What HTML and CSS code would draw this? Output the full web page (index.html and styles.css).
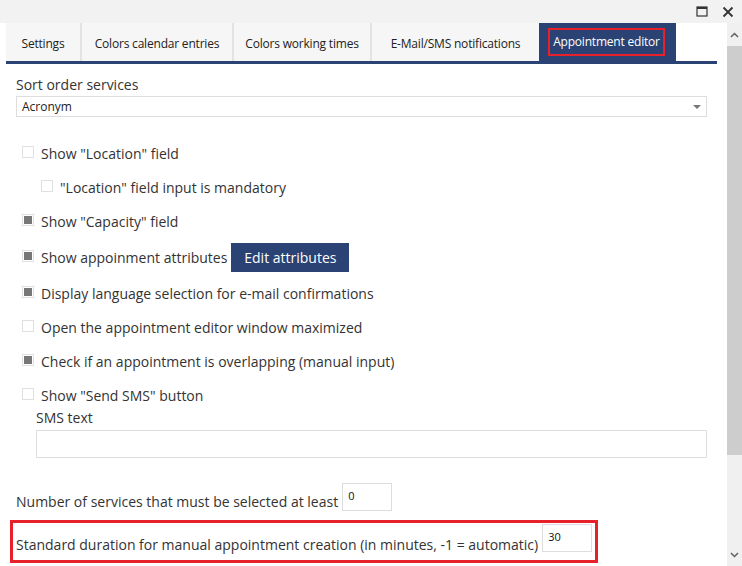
FILE: index.html
```html
<!DOCTYPE html>
<html lang="en">
<head>
    <meta charset="UTF-8">
    <title>Appointment editor</title>
    <link rel="stylesheet" href="styles.css">
</head>
<body>

    <div class="titlebar">
        <svg class="tb-icon" width="12" height="11" viewBox="0 0 12 11">
            <rect x="1" y="1" width="10" height="9" fill="none" stroke="#333" stroke-width="1.2"/>
            <rect x="1" y="1" width="10" height="2" fill="#333"/>
        </svg>
        <svg class="tb-icon" width="12" height="12" viewBox="0 0 12 12">
            <path d="M1.5 1.5 L10.5 10.5 M10.5 1.5 L1.5 10.5" stroke="#333" stroke-width="1.8"/>
        </svg>
    </div>

    <div class="window">

        <div class="content">

            <div class="tabs">
                <div class="tab t-settings">Settings</div>
                <div class="tab t-calendar">Colors calendar entries</div>
                <div class="tab t-working">Colors working times</div>
                <div class="tab t-notify">E-Mail/SMS notifications</div>
                <div class="tab t-editor active"><span class="mark">Appointment editor</span></div>
            </div>

            <div class="form">

                <div class="label">Sort order services</div>
                <div class="select">
                    <span>Acronym</span>
                    <span class="caret"></span>
                </div>

                <div class="options">
                    <div class="check"><span class="box"></span>Show "Location" field</div>
                    <div class="check sub"><span class="box"></span>"Location" field input is mandatory</div>
                    <div class="check"><span class="box on"></span>Show "Capacity" field</div>
                    <div class="check wide"><span class="box on"></span>Show appoinment attributes<button class="btn">Edit attributes</button></div>
                    <div class="check"><span class="box on"></span>Display language selection for e-mail confirmations</div>
                    <div class="check"><span class="box"></span>Open the appointment editor window maximized</div>
                    <div class="check"><span class="box on"></span>Check if an appointment is overlapping (manual input)</div>
                    <div class="check"><span class="box"></span>Show "Send SMS" button</div>
                </div>

                <div class="sms">
                    <div class="label">SMS text</div>
                    <div class="textbox"></div>
                </div>

                <div class="row">Number of services that must be selected at least <span class="num">0</span></div>

                <div class="row marked">Standard duration for manual appointment creation (in minutes, -1 = automatic) <span class="num">30</span></div>

            </div>
        </div>

        <div class="scrollbar">
            <div class="sb-btn">
                <svg width="9" height="6" viewBox="0 0 9 6"><path d="M1 5 L4.5 1.5 L8 5" fill="none" stroke="#606060" stroke-width="1.5"/></svg>
            </div>
            <div class="sb-thumb"></div>
            <div class="sb-track"></div>
            <div class="sb-btn">
                <svg width="9" height="6" viewBox="0 0 9 6"><path d="M1 1 L4.5 4.5 L8 1" fill="none" stroke="#606060" stroke-width="1.5"/></svg>
            </div>
        </div>

    </div>

</body>
</html>
```

FILE: styles.css
```css
html, body {
    margin: 0;
    padding: 0;
}

body {
    width: 742px;
    height: 566px;
    overflow: hidden;
    background: #ffffff;
    font-family: "Open Sans", "Noto Sans", sans-serif;
    font-size: 14px;
    color: #333333;
}

.titlebar {
    height: 23px;
    background: #f2f2f2;
    display: flex;
    justify-content: flex-end;
    align-items: center;
    gap: 14px;
    padding-right: 8px;
    box-sizing: border-box;
}

.tb-icon {
    display: block;
}

.window {
    display: flex;
    height: 543px;
}

.content {
    flex: 1;
    overflow: hidden;
}

.tabs {
    display: flex;
    margin: 0 10px 0 6px;
    height: 38px;
    border-bottom: 3px solid #2a4274;
}

.tab {
    background: #f6f6f6;
    font-size: 12px;
    letter-spacing: -0.2px;
    color: #222222;
    display: flex;
    align-items: center;
    justify-content: center;
    box-sizing: border-box;
    padding-top: 2px;
    white-space: nowrap;
}

.tab + .tab {
    border-left: 2px solid #e3e3e3;
}

.t-settings { width: 74px; }
.t-calendar { width: 152px; }
.t-working  { width: 138px; }
.t-notify   { width: 169px; }
.t-editor   { width: 137px; }

.tab.active {
    background: #2a4274;
    color: #ffffff;
    border-left: none;
    padding: 0 2px 0 0;
}

.tab .mark {
    border: 2px solid #e8202a;
    padding: 3px 3px 4px 3px;
}

.form {
    padding: 11px 20px 0 16px;
}

.label {
    line-height: 19px;
}

.select {
    margin-top: 2px;
    height: 21px;
    border: 1px solid #dddddd;
    box-sizing: border-box;
    display: flex;
    align-items: center;
    justify-content: space-between;
    padding: 0 5px;
    font-size: 12px;
    color: #222222;
}

.caret {
    width: 0;
    height: 0;
    border-left: 4px solid transparent;
    border-right: 4px solid transparent;
    border-top: 4px solid #777777;
}

.options {
    padding-top: 19px;
    padding-left: 6px;
}

.check {
    display: flex;
    align-items: center;
    height: 34px;
}

.check.sub {
    padding-left: 19px;
}

.check.wide {
    height: 37px;
    margin-top: 1px;
}

.box {
    width: 12px;
    height: 12px;
    border: 1px solid #e0e0e0;
    box-sizing: border-box;
    margin-right: 7px;
    margin-top: -3px;
    position: relative;
    flex: none;
}

.box.on::after {
    content: "";
    position: absolute;
    left: 1px;
    top: 1px;
    width: 8px;
    height: 8px;
    background: #777777;
}

.btn {
    margin-left: 4px;
    height: 29px;
    width: 118px;
    border: none;
    background: #2a4274;
    color: #ffffff;
    font-family: "Open Sans", "Noto Sans", sans-serif;
    font-size: 14px;
    padding: 0;
}

.sms {
    padding-left: 20px;
    margin-top: -4px;
}

.textbox {
    margin-top: 3px;
    height: 28px;
    border: 1px solid #dddddd;
    box-sizing: border-box;
}

.row {
    display: flex;
    align-items: flex-end;
    margin-top: 25px;
    line-height: 19px;
}

.num {
    margin-left: 4px;
    width: 50px;
    height: 28px;
    border: 1px solid #dddddd;
    box-sizing: border-box;
    font-size: 11px;
    color: #111111;
    line-height: 14px;
    padding: 5px 0 0 5px;
}

.row.marked {
    margin: 9px 0 0 -6px;
    width: 588px;
    height: 43px;
    border: 3px solid #e8202a;
    box-sizing: border-box;
    padding: 0 0 6px 3px;
}

.row.marked .num {
    margin-bottom: 2px;
}

.scrollbar {
    width: 15px;
    background: #f0f0f0;
    display: flex;
    flex-direction: column;
}

.sb-btn {
    height: 23px;
    display: flex;
    align-items: center;
    justify-content: center;
}

.sb-thumb {
    height: 409px;
    background: #cdcdcd;
}

.sb-track {
    flex: 1;
}
```
